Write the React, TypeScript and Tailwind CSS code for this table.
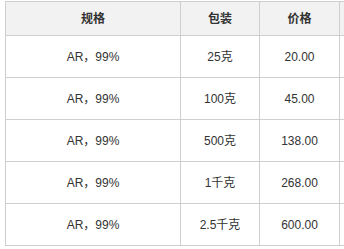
const rows = [
  ["AR，99%", "25克", "20.00"],
  ["AR，99%", "100克", "45.00"],
  ["AR，99%", "500克", "138.00"],
  ["AR，99%", "1千克", "268.00"],
  ["AR，99%", "2.5千克", "600.00"],
];

export default function App() {
  return (
    <div className="w-[344px] h-[249px] overflow-hidden bg-white pt-px pl-[5px] font-['Liberation_Sans','Noto_Sans_CJK_SC',sans-serif] text-[12px] text-[#333]">
      <table className="border-collapse table-fixed w-[440px]">
        <colgroup>
          <col className="w-[175px]" />
          <col className="w-[79px]" />
          <col className="w-[80px]" />
          <col className="w-[106px]" />
        </colgroup>
        <thead>
          <tr className="h-[34px] bg-[#f2f2f2]">
            <th className="border border-[#cfcfcf] font-bold text-center p-0">规格</th>
            <th className="border border-[#cfcfcf] font-bold text-center p-0">包装</th>
            <th className="border border-[#cfcfcf] font-bold text-center p-0">价格</th>
            <th className="border border-[#cfcfcf] p-0"></th>
          </tr>
        </thead>
        <tbody>
          {rows.map((r, i) => (
            <tr key={i} className="h-[42px]">
              <td className="border border-[#cfcfcf] text-center p-0">{r[0]}</td>
              <td className="border border-[#cfcfcf] text-center p-0">{r[1]}</td>
              <td className="border border-[#cfcfcf] text-center p-0">{r[2]}</td>
              <td className="border border-[#cfcfcf] p-0"></td>
            </tr>
          ))}
        </tbody>
      </table>
    </div>
  );
}
